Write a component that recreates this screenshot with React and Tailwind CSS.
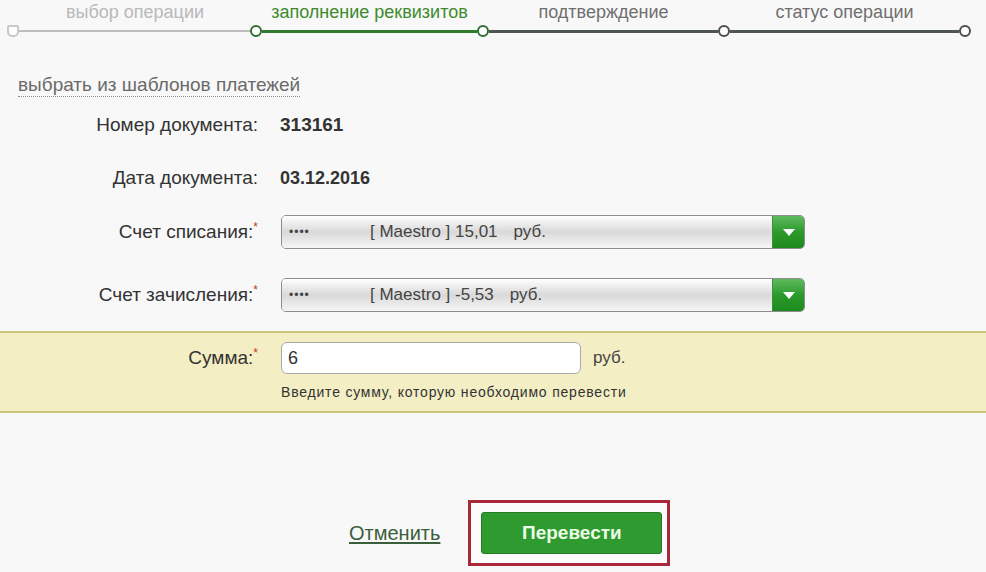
import React from "react";

const steps = [
  { label: "выбор операции", width: 242, color: "text-[#b9b9b9]" },
  { label: "заполнение реквизитов", width: 227, color: "text-[#3c8a2c]" },
  { label: "подтверждение", width: 241, color: "text-[#6f6f6f]" },
  { label: "статус операции", width: 241, color: "text-[#6f6f6f]" },
];

const Node = ({ green }) => (
  <div
    className={`w-[12px] h-[12px] rounded-full border-2 bg-white shrink-0 ${
      green ? "border-[#2f6e2f]" : "border-[#4d4d4d]"
    }`}
  />
);

const Select = ({ amount }) => (
  <div className="flex w-[524px] h-[34px] rounded-[5px] border border-[#8d8d8d] overflow-hidden">
    <div className="flex-1 flex items-center bg-gradient-to-b from-[#ffffff] via-[#d9d9d9] to-[#f6f6f6] text-[17px] text-[#444]">
      <span className="ml-[7px] w-[81px] text-[12px] tracking-[1px]">••••</span>
      <span>[ Maestro ] {amount}</span>
      <span className="ml-[16px]">руб.</span>
    </div>
    <div className="w-[32px] flex items-center justify-center bg-gradient-to-b from-[#5dbb5d] via-[#2b9a2b] to-[#1c8a1c] border-l border-[#3f8f3f]">
      <svg width="14" height="9" viewBox="0 0 14 9">
        <path d="M1 1 L13 1 L7 8 Z" fill="#ffffff" />
      </svg>
    </div>
  </div>
);

const Label = ({ children, req }) => (
  <div className="w-[258px] text-right text-[19px] text-[#333] shrink-0">
    {children}
    {req && <span className="text-[#c0392b] text-[12px] align-top">*</span>}
  </div>
);

export default function App() {
  return (
    <div
      className="w-[986px] h-[572px] bg-[#f8f8f8] overflow-hidden"
      style={{ fontFamily: '"Liberation Sans", Arial, sans-serif' }}
    >
      {/* steps */}
      <div className="flex pl-[14px] pt-[1px] text-[18px] leading-[22px]">
        {steps.map((s) => (
          <div key={s.label} className={`text-center ${s.color}`} style={{ width: s.width }}>
            {s.label}
          </div>
        ))}
      </div>
      <div className="flex items-center pl-[7px] mt-[1px] h-[14px]">
        <div className="w-[12px] h-[12px] rounded-b-[5px] rounded-t-[2px] border-2 border-[#c8c8c8] bg-white shrink-0" />
        <div className="w-[231px] h-[2px] bg-[#bdbdbd]" />
        <Node green />
        <div className="w-[215px] h-[3px] bg-[#2f7a2f]" />
        <Node green />
        <div className="w-[229px] h-[3px] bg-[#4f5553]" />
        <Node />
        <div className="w-[229px] h-[3px] bg-[#4f5553]" />
        <Node />
      </div>

      {/* template link */}
      <div className="mt-[33px] ml-[18px] h-[28px] flex items-center">
        <span className="text-[19px] text-[#6a6a6a] border-b border-dotted border-[#8a8a8a] leading-[22px]">
          выбрать из шаблонов платежей
        </span>
      </div>

      <div className="flex items-center h-[28px] mt-[12px]">
        <Label>Номер документа:</Label>
        <div className="ml-[22px] text-[19px] font-bold text-[#333]">313161</div>
      </div>
      <div className="flex items-center h-[28px] mt-[25px]">
        <Label>Дата документа:</Label>
        <div className="ml-[22px] text-[18px] font-bold text-[#333]">03.12.2016</div>
      </div>

      <div className="flex items-center h-[34px] mt-[23px]">
        <Label req>Счет списания:</Label>
        <div className="ml-[23px]">
          <Select amount="15,01" />
        </div>
      </div>
      <div className="flex items-center h-[34px] mt-[29px]">
        <Label req>Счет зачисления:</Label>
        <div className="ml-[23px]">
          <Select amount="-5,53" />
        </div>
      </div>

      {/* amount band */}
      <div className="mt-[19px] h-[82px] bg-[#f4eec4] border-y-2 border-[#cdc67a] pt-[9px]">
        <div className="flex items-center h-[32px]">
          <Label req>Сумма:</Label>
          <div className="ml-[23px] w-[300px] h-[32px] rounded-[6px] border border-[#a9a9a9] bg-white flex items-center pl-[6px] text-[18px] text-[#333]">
            6
          </div>
          <div className="ml-[12px] text-[17px] text-[#444]">руб.</div>
        </div>
        <div className="ml-[281px] mt-[10px] text-[14px] tracking-[0.8px] text-[#333] leading-[16px]">
          Введите сумму, которую необходимо перевести
        </div>
      </div>

      {/* actions */}
      <div className="flex items-center ml-[349px] mt-[87px]">
        <a className="text-[20px] text-[#3a5f3a] underline underline-offset-2">Отменить</a>
        <div className="ml-[28px] border-[3px] border-[#a8283a] pt-[9px] pb-[9px] pl-[10px] pr-[5px] bg-[#fbfbfb]">
          <button className="w-[181px] h-[42px] rounded-[3px] bg-[#2e9a30] border border-[#237d24] text-[19px] font-bold text-[#ecfde6]">
            Перевести
          </button>
        </div>
      </div>
    </div>
  );
}
